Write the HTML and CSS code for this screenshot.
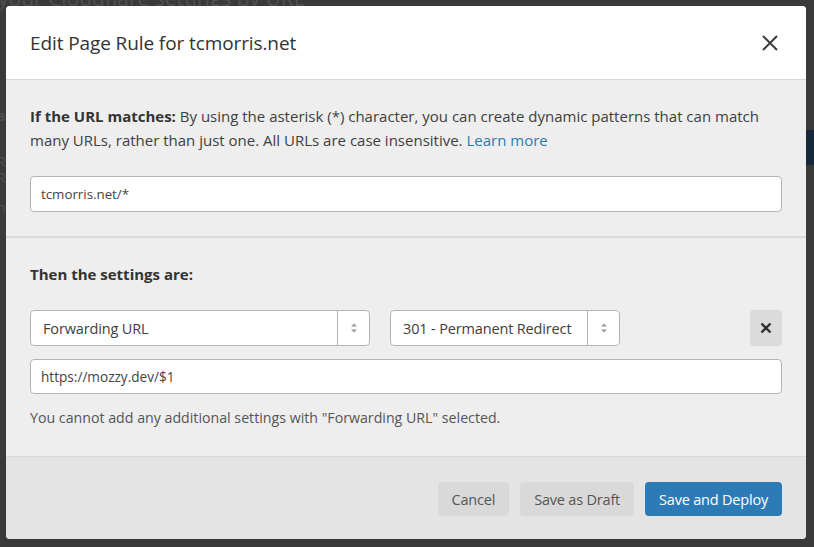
FILE: index.html
```html
<!DOCTYPE html>
<html>
<head>
<meta charset="utf-8">
<link rel="stylesheet" href="styles.css">
</head>
<body>
<div class="page">
  <h1 class="page-title">your Cloudflare settings by URL</h1>
  <div class="page-side">
    <span class="side-a">a</span><span class="side-r1">R</span><span class="side-r2">R</span><span class="side-n">n</span>
  </div>
  <div class="page-btn"></div>
</div>

<div class="modal">
  <div class="modal-header">
    <h2 class="modal-title">Edit Page Rule for tcmorris.net</h2>
    <button class="close-btn" aria-label="Close">
      <svg width="16" height="16" viewBox="0 0 16 16"><path d="M1 1 L15 15 M15 1 L1 15" stroke="#3d3d3d" stroke-width="2"/></svg>
    </button>
  </div>
  <div class="section">
    <p class="desc"><strong>If the URL matches:</strong> By using the asterisk (*) character, you can create dynamic patterns that can match many URLs, rather than just one. All URLs are case insensitive. <a href="#" class="link">Learn more</a></p>
    <div class="input">tcmorris.net/*</div>
  </div>
  <div class="section section-2">
    <p class="label"><strong>Then the settings are:</strong></p>
    <div class="row">
      <div class="select select-1">
        <span class="select-value">Forwarding URL</span>
        <span class="select-arrow"><svg width="8" height="12" viewBox="0 0 8 12"><path d="M4 1.5 L7 4.5 H1 Z M4 10.5 L7 7.5 H1 Z" fill="#9a9a9a"/></svg></span>
      </div>
      <div class="select select-2">
        <span class="select-value">301 - Permanent Redirect</span>
        <span class="select-arrow"><svg width="8" height="12" viewBox="0 0 8 12"><path d="M4 1.5 L7 4.5 H1 Z M4 10.5 L7 7.5 H1 Z" fill="#9a9a9a"/></svg></span>
      </div>
      <button class="remove-btn" aria-label="Remove">
        <svg width="12" height="12" viewBox="0 0 12 12"><path d="M1.5 1.5 L10.5 10.5 M10.5 1.5 L1.5 10.5" stroke="#2e2e2e" stroke-width="2.4"/></svg>
      </button>
    </div>
    <div class="input input-2">https://mozzy.dev/$1</div>
    <p class="help">You cannot add any additional settings with "Forwarding URL" selected.</p>
  </div>
  <div class="footer">
    <button class="btn btn-grey">Cancel</button>
    <button class="btn btn-grey">Save as Draft</button>
    <button class="btn btn-blue">Save and Deploy</button>
  </div>
</div>
</body>
</html>
```

FILE: styles.css
```css
* { box-sizing: border-box; }
html, body { height: 100%; }
body {
  margin: 0;
  background: #3a3a3a;
  font-family: "Open Sans", "Noto Sans", sans-serif;
  overflow: hidden;
  position: relative;
}
.page {
  padding-left: 0;
}
.page-title {
  margin: -15px 0 0 -2px;
  font-size: 21px;
  font-weight: 400;
  color: #4f4f4f;
  line-height: 26px;
  white-space: nowrap;
}
.page-side {
  display: flex;
  flex-direction: column;
  margin-left: -3px;
  font-size: 14px;
  line-height: 16px;
  color: #4f4f4f;
}
.side-a { margin-top: 97px; font-weight: 700; }
.side-r1 { margin-top: 30px; }
.side-r2 { margin-top: 0; }
.side-n { margin-top: 14px; }
.page-btn {
  position: absolute;
  right: -10px;
  top: 130px;
  width: 20px;
  height: 35px;
  border-radius: 4px;
  background: #16293b;
}
.modal {
  position: absolute;
  left: 6px;
  top: 6px;
  width: 800px;
  height: 533px;
  background: #eeeeee;
  border-radius: 4px;
  overflow: hidden;
  display: flex;
  flex-direction: column;
  color: #404040;
}
.modal-header {
  background: #fff;
  height: 74px;
  flex-shrink: 0;
  border-bottom: 1px solid #d8d8d8;
  display: flex;
  align-items: center;
  justify-content: space-between;
  padding: 0 28px 0 24px;
}
.modal-title {
  margin: 0;
  font-size: 19px;
  font-weight: 400;
  color: #333;
  letter-spacing: -0.1px;
}
.close-btn {
  border: 0;
  background: none;
  padding: 0;
  width: 16px;
  height: 16px;
  display: flex;
  margin-top: 1px;
}
.section {
  flex-shrink: 0;
  padding: 24px 24px 24px 24px;
  border-bottom: 2px solid #dadada;
}
.desc {
  margin: 0;
  font-size: 15px;
  line-height: 24px;
  color: #404040;
}
.desc strong, .label strong { color: #333; font-weight: 700; }
.link { color: #2b7bb0; text-decoration: none; }
.input {
  margin-top: 24px;
  height: 36px;
  background: #fff;
  border: 1px solid #b4b4b4;
  border-radius: 4px;
  padding: 0 10px;
  display: flex;
  align-items: center;
  font-size: 13.3px;
  color: #444;
}
.section-2 {
  border-bottom: 1px solid #d8d8d8;
  padding-bottom: 26px;
}
.label {
  margin: 0;
  font-size: 15px;
  line-height: 24px;
}
.row {
  margin-top: 24px;
  display: flex;
  align-items: center;
  gap: 20px;
}
.select {
  height: 36px;
  background: #fff;
  border: 1px solid #b4b4b4;
  border-radius: 4px;
  display: flex;
  align-items: stretch;
  font-size: 14.5px;
  color: #404040;
}
.select-1 { width: 340px; }
.select-2 { width: 230px; }
.select-value {
  flex: 1;
  display: flex;
  align-items: center;
  padding-left: 12px;
  letter-spacing: -0.15px;
  white-space: nowrap;
  overflow: hidden;
}
.select-arrow {
  width: 32px;
  border-left: 1px solid #b4b4b4;
  display: flex;
  align-items: center;
  justify-content: center;
}
.remove-btn {
  margin-left: auto;
  width: 32px;
  height: 36px;
  border: 0;
  border-radius: 4px;
  background: #dbdbdb;
  display: flex;
  align-items: center;
  justify-content: center;
  padding: 0;
}
.input-2 { margin-top: 13px; height: 35px; font-size: 13.6px; }
.help {
  margin: 12px 0 0 0;
  font-size: 14.2px;
  line-height: 24px;
  color: #555;
}
.footer {
  flex: 1;
  background: #e4e4e4;
  display: flex;
  justify-content: flex-end;
  align-items: flex-start;
  gap: 11px;
  padding: 25px 24px;
}
.btn {
  height: 34px;
  border: 0;
  border-radius: 4px;
  font-family: "Open Sans", "Noto Sans", sans-serif;
  font-size: 14.5px;
  padding: 0 14px;
  letter-spacing: -0.2px;
}
.btn-grey { background: #d9d9d9; color: #555; }
.btn-blue { background: #2d7bb6; color: #fff; }
```
